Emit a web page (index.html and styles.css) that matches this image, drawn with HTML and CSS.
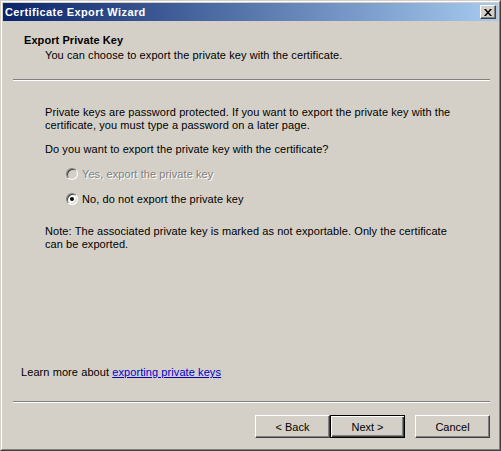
FILE: index.html
```html
<!DOCTYPE html>
<html lang="en">
<head>
    <meta charset="UTF-8">
    <title>Certificate Export Wizard</title>
    <link rel="stylesheet" href="styles.css">
</head>
<body>
    <div class="window">
        <div class="frame">
            <div class="titlebar">
                <span class="title">Certificate Export Wizard</span>
                <span class="close">
                    <svg width="8" height="7" viewBox="0 0 8 7">
                        <path d="M0 0h2l2 2.5 2-2.5h2l-3 3.5 3 3.5h-2l-2-2.5-2 2.5h-2l3-3.5z" fill="#000"/>
                    </svg>
                </span>
            </div>
            <div class="content">
                <div class="header">
                    <div class="heading">Export Private Key</div>
                    <div class="subtitle">You can choose to export the private key with the certificate.</div>
                </div>
                <div class="sep"></div>
                <div class="body">
                    <p class="para">Private keys are password protected. If you want to export the private key with the<br>certificate, you must type a password on a later page.</p>
                    <p class="question">Do you want to export the private key with the certificate?</p>
                    <div class="option disabled">
                        <span class="radio"></span>
                        <span>Yes, export the private key</span>
                    </div>
                    <div class="option">
                        <span class="radio checked"></span>
                        <span>No, do not export the private key</span>
                    </div>
                    <p class="note">Note: The associated private key is marked as not exportable. Only the certificate<br>can be exported.</p>
                </div>
                <div class="learn">Learn more about <a href="#">exporting private keys</a></div>
                <div class="sep"></div>
                <div class="buttons">
                    <button class="btn">&lt; Back</button>
                    <button class="btn default">Next &gt;</button>
                    <button class="btn cancel">Cancel</button>
                </div>
            </div>
        </div>
    </div>
</body>
</html>
```

FILE: styles.css
```css
body {
    margin: 0;
    font-family: "Liberation Sans", Arial, sans-serif;
    font-size: 11px;
    line-height: 13px;
    letter-spacing: 0.08px;
    color: #000;
    background: #d4d0c8;
}

.window {
    width: 501px;
    height: 451px;
    box-sizing: border-box;
    border: 1px solid;
    border-color: #d4d0c8 #404040 #404040 #d4d0c8;
    background: #d4d0c8;
}

.frame {
    height: 100%;
    box-sizing: border-box;
    border: 1px solid;
    border-color: #fff #808080 #808080 #fff;
    padding: 1px;
    display: flex;
    flex-direction: column;
}

.titlebar {
    height: 18px;
    display: flex;
    align-items: center;
    justify-content: space-between;
    padding: 0 2px 0 2px;
    background: linear-gradient(to right, #0a246a, #a6caf0);
}

.title {
    color: #fff;
    font-weight: bold;
    letter-spacing: 0.4px;
}

.close {
    width: 14px;
    height: 12px;
    display: flex;
    align-items: center;
    justify-content: center;
    background: #d4d0c8;
    border: 1px solid;
    border-color: #fff #404040 #404040 #fff;
    box-shadow: inset -1px -1px #808080;
}

.content {
    flex: 1;
    display: flex;
    flex-direction: column;
}

.header {
    padding: 13px 0 0 21px;
    height: 45px;
}

.heading {
    font-weight: bold;
    margin-bottom: 2px;
}

.subtitle {
    padding-left: 21px;
}

.sep {
    margin: 0 8px 0 10px;
    border-top: 1px solid #808080;
    border-bottom: 1px solid #fff;
    height: 0;
}

.body {
    flex: 1;
    padding: 25px 0 0 42px;
}

.body p {
    margin: 0;
}

.question {
    margin-top: 11px !important;
}

.option {
    display: flex;
    align-items: center;
    gap: 4px;
    margin: 11px 0 0 21px;
    height: 14px;
}

.option + .option {
    margin-top: 11px;
}

.option.disabled {
    color: #808080;
    text-shadow: 1px 1px #fff;
}

.radio {
    width: 10px;
    height: 10px;
    border-radius: 50%;
    background: #fff;
    border: 1px solid;
    border-color: #808080 #fff #fff #808080;
    box-shadow: inset 1px 1px #404040, inset -1px -1px #d4d0c8;
    position: relative;
}

.disabled .radio {
    background: #d4d0c8;
}

.radio.checked::after {
    content: "";
    position: absolute;
    left: 3px;
    top: 3px;
    width: 4px;
    height: 4px;
    border-radius: 50%;
    background: #000;
}

.note {
    margin-top: 19px !important;
}

.learn {
    padding-left: 18px;
    margin-bottom: 22px;
}

.learn a {
    color: #0000cc;
}

.buttons {
    display: flex;
    justify-content: flex-end;
    padding: 12px 8px 10px 0;
}

.btn {
    width: 75px;
    height: 23px;
    font-family: "Liberation Sans", Arial, sans-serif;
    font-size: 11px;
    color: #000;
    background: #d4d0c8;
    border: 1px solid;
    border-color: #fff #404040 #404040 #fff;
    box-shadow: inset -1px -1px #808080;
    padding: 0;
}

.btn.default {
    border-color: #000;
    box-shadow: inset 1px 1px #fff, inset -1px -1px #404040, inset -2px -2px #808080;
}

.btn.cancel {
    margin-left: 10px;
}
```
